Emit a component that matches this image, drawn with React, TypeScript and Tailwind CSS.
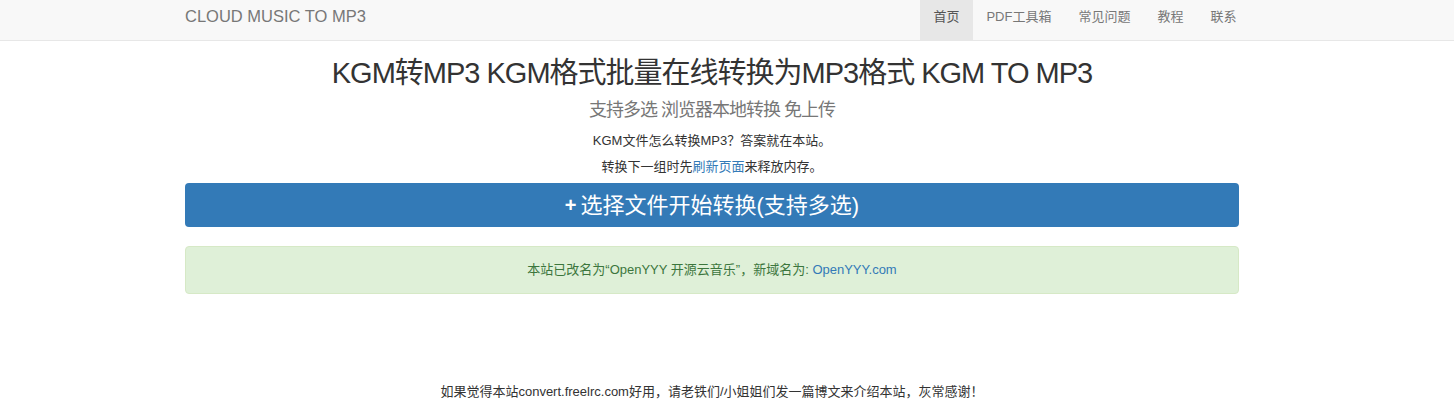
const navItems = [
  { label: "首页", active: true },
  { label: "PDF工具箱", active: false },
  { label: "常见问题", active: false },
  { label: "教程", active: false },
  { label: "联系", active: false },
]

const font = "font-['Liberation_Sans','Noto_Sans_CJK_SC',sans-serif]"

export default function App() {
  return (
    <div className={`${font} min-h-[400px] bg-white text-[#333]`}>

      {/* NAVBAR */}
      <header className="h-[41px] bg-[#f8f8f8] border-b border-[#e7e7e7]">
        <div className="ml-[185px] w-[1054px] h-10 flex items-center justify-between">
          <span className="text-[16.5px] text-[#777] leading-8 pb-2">
            CLOUD MUSIC TO MP3
          </span>
          <nav className="flex h-10 mr-[-11px]">
            {navItems.map((item) => (
              <a
                key={item.label}
                className={`px-[13.5px] text-[13px] leading-[33px] h-10 ${
                  item.active ? "bg-[#e7e7e7] text-[#555]" : "text-[#777]"
                }`}
              >
                {item.label}
              </a>
            ))}
          </nav>
        </div>
      </header>

      {/* MAIN */}
      <main className="ml-[185px] w-[1054px] text-center">
        <h1 className="text-[29px] leading-[36px] mt-[14px] text-[#333] tracking-[-1px]">
          KGM转MP3 KGM格式批量在线转换为MP3格式 KGM TO MP3
        </h1>
        <h2 className="text-[18px] leading-[24px] mt-[7px] text-[#777] tracking-[-1px]">
          支持多选 浏览器本地转换 免上传
        </h2>
        <p className="text-[13px] leading-[26px] mt-[6px]">
          KGM文件怎么转换MP3？答案就在本站。
        </p>
        <p className="text-[13px] leading-[26px]">
          转换下一组时先<a className="text-[#337ab7]">刷新页面</a>来释放内存。
        </p>

        <button className="w-full h-[44px] mt-[3px] rounded-[4px] bg-[#337ab7] text-white text-[22px] flex items-center justify-center gap-1">
          <span className="font-bold text-[20px]">+</span>
          <span>选择文件开始转换(支持多选)</span>
        </button>

        <div className="mt-[19px] h-[48px] rounded-[4px] bg-[#dff0d8] border border-[#d6e9c6] text-[#3c763d] text-[13px] flex items-center justify-center">
          本站已改名为“OpenYYY 开源云音乐”，新域名为:&nbsp;
          <a className="text-[#337ab7]">OpenYYY.com</a>
        </div>

        <p className="mt-[88px] text-[13px] leading-[20px] text-[#333]">
          如果觉得本站convert.freelrc.com好用，请老铁们/小姐姐们发一篇博文来介绍本站，灰常感谢！
        </p>
      </main>
    </div>
  )
}
